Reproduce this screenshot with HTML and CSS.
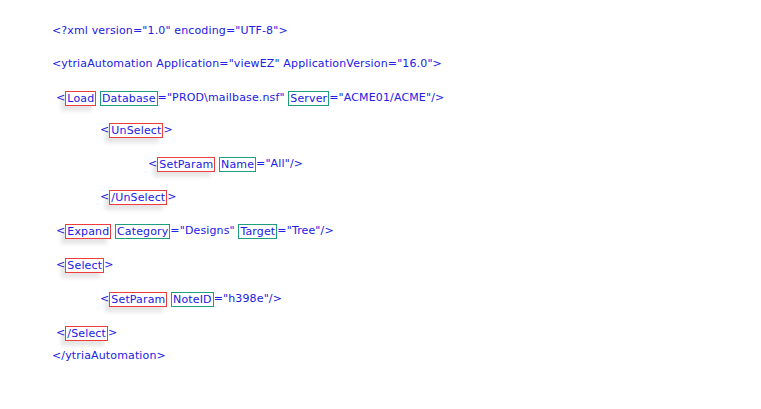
FILE: index.html
```html
<!DOCTYPE html>
<html lang="en">

<head>
	<meta charset="UTF-8">
	<meta name="viewport" content="width=device-width, initial-scale=1.0">
	<title>ytriaAutomation</title>
	<link rel="stylesheet" href="styles.css">
</head>

<body>
	<div class="code">
		<div class="line">&lt;?xml version="1.0" encoding="UTF-8"&gt;</div>
		<div class="line up1">&lt;ytriaAutomation Application="viewEZ" ApplicationVersion="16.0"&gt;</div>
		<div class="line lvl1">&lt;<span class="tag">Load</span> <span class="attr">Database</span>="PROD\mailbase.nsf" <span class="attr">Server</span>="ACME01/ACME"/&gt;</div>
		<div class="line lvl2 up2">&lt;<span class="tag">UnSelect</span>&gt;</div>
		<div class="line lvl3">&lt;<span class="tag">SetParam</span> <span class="attr">Name</span>="All"/&gt;</div>
		<div class="line lvl2 up1">&lt;<span class="tag">/UnSelect</span>&gt;</div>
		<div class="line lvl1">&lt;<span class="tag">Expand</span> <span class="attr">Category</span>="Designs" <span class="attr">Target</span>="Tree"/&gt;</div>
		<div class="line lvl1">&lt;<span class="tag">Select</span>&gt;</div>
		<div class="line lvl2">&lt;<span class="tag">SetParam</span> <span class="attr">NoteID</span>="h398e"/&gt;</div>
		<div class="line lvl1">&lt;<span class="tag">/Select</span>&gt;</div>
		<div class="line last">&lt;/ytriaAutomation&gt;</div>
	</div>
</body>

</html>
```

FILE: styles.css
```css
* {
	margin: 0;
	padding: 0;
	box-sizing: border-box;
}

body {
	background: #ffffff;
	font-family: "DejaVu Sans", Verdana, sans-serif;
	font-size: 11px;
	letter-spacing: 0.14px;
	color: #2020e4;
}

.code {
	display: flex;
	flex-direction: column;
	gap: 20px;
	padding: 24px 0 0 52px;
}

.line {
	height: 14px;
	line-height: 14px;
	white-space: pre;
}

.lvl1 {
	padding-left: 4px;
}

.lvl2 {
	padding-left: 48px;
}

.lvl3 {
	padding-left: 96px;
}

.up1 {
	margin-top: -1px;
}

.up2 {
	margin-top: -2px;
}

.last {
	margin-top: -11px;
}

.tag,
.attr {
	display: inline-block;
	line-height: 13px;
	padding: 0 1px;
	vertical-align: -1px;
}

.tag {
	border: 1px solid #ee3b3b;
	box-shadow: -4px 5px 4px 0 rgba(0, 0, 0, 0.1);
}

.attr {
	border: 1px solid #1e9e7e;
}
```
